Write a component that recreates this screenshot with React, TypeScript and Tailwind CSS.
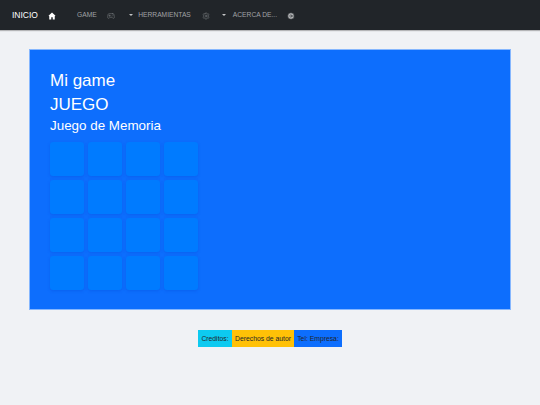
import React from 'react';
import { Gamepad2, Settings, ArrowRightCircle } from 'lucide-react';

const tiles = Array.from({ length: 16 }, (_, i) => i);

function Caret() {
  return <span className="w-0 h-0 border-x-[2px] border-x-transparent border-t-[2px] border-t-[#c4c5c6]" />;
}

export default function App() {
  return (
    <div className="min-h-[405px] bg-[#f0f2f5] font-['Liberation_Sans',Arial,sans-serif]">
      {/* Navbar */}
      <nav className="h-[30px] bg-[#212529] flex items-center pl-3 shadow-[0_1px_1px_rgba(0,0,0,0.25)]">
        <span className="text-[8.5px] text-white">INICIO</span>
        <svg viewBox="0 0 16 16" className="w-[8px] h-[8px] ml-[10.5px] mt-[1px]" fill="white">
          <path d="M8 1 L1 7.5 L2.5 8.5 V15 H6.5 V10.5 H9.5 V15 H13.5 V8.5 L15 7.5 Z" />
        </svg>
        <span className="text-[6.7px] text-[#a0a2a5] ml-[20.5px]">GAME</span>
        <Gamepad2 className="w-[8px] h-[8px] ml-[10.5px] mt-[1px] text-[#85888b]" strokeWidth={1.5} />
        <span className="ml-[13.5px] flex"><Caret /></span>
        <span className="text-[6.7px] text-[#a0a2a5] ml-[5.5px]">HERRAMIENTAS</span>
        <Settings className="w-[8px] h-[8px] ml-[11px] mt-[1px] text-[#85888b]" strokeWidth={1.5} />
        <span className="ml-[12px] flex"><Caret /></span>
        <span className="text-[6.7px] text-[#a0a2a5] ml-[7px]">ACERCA DE...</span>
        <ArrowRightCircle className="w-[8px] h-[8px] ml-[10px] mt-[1px] text-[#212529]" fill="#b5b7b9" strokeWidth={2} />
      </nav>

      {/* Game panel */}
      <main className="px-[29px] pt-[19px]">
        <section className="h-[261px] bg-[#0d6efd] pl-5 pt-5 text-white border border-[#86b7fe]">
          <h1 className="text-[17px] leading-[22px]">Mi game</h1>
          <h2 className="text-[17px] leading-[22px] mt-[2px]">JUEGO</h2>
          <h3 className="text-[13.4px] leading-[17px] mt-[1px]">Juego de Memoria</h3>
          <div className="grid grid-cols-[repeat(4,34px)] gap-1 mt-[8px]">
            {tiles.map(t => (
              <div key={t} className="h-[34px] rounded-[3px] bg-[#007bff] shadow-[0_1px_3px_rgba(0,60,200,0.25)]" />
            ))}
          </div>
        </section>
      </main>

      {/* Footer */}
      <footer className="flex justify-center mt-5 text-[6.8px] leading-[17px] text-[#212529]">
        <span className="w-[34px] text-center bg-[#0dcaf0]">Creditos:</span>
        <span className="w-[62px] text-center bg-[#ffc107]">Derechos de autor</span>
        <span className="w-[48px] text-center bg-[#0d6efd]">Tel: Empresa:</span>
      </footer>
    </div>
  );
}
